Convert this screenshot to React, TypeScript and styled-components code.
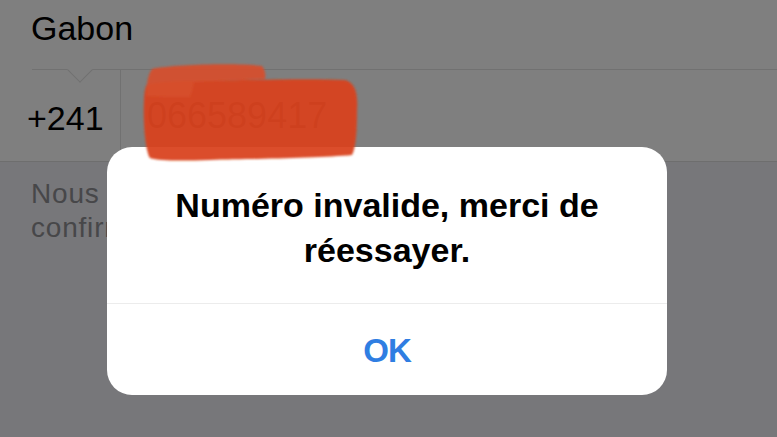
import React from "react";
import styled, { createGlobalStyle } from "styled-components";

const Global = createGlobalStyle`
  html, body { margin: 0; padding: 0; }
  body {
    font-family: "Liberation Sans", Arial, sans-serif;
    background: #77777a;
  }
  * { box-sizing: border-box; }
`;

const Screen = styled.div`
  position: relative;
  width: 777px;
  height: 437px;
  overflow: hidden;
  background: #efeff4;
`;

const Form = styled.div`
  display: flex;
  flex-direction: column;
`;

const CountryRow = styled.div`
  height: 69px;
  padding: 8px 0 0 31px;
  background: #fff;
  font-size: 34px;
  line-height: 40px;
  color: #000;
`;

const Separator = styled.div`
  position: relative;
  height: 1px;
  background: #fff;
  &::before {
    content: "";
    position: absolute;
    left: 32px;
    right: 0;
    top: 0;
    height: 1px;
    background: #e2e2e2;
  }
  &::after {
    content: "";
    position: absolute;
    left: 71px;
    top: -8px;
    width: 17px;
    height: 17px;
    background: #fff;
    border-right: 1px solid #e2e2e2;
    border-bottom: 1px solid #e2e2e2;
    transform: rotate(45deg);
  }
`;

const PhoneRow = styled.div`
  display: flex;
  height: 92px;
  background: #fff;
  border-bottom: 1px solid #dcdcdc;
`;

const CodeCell = styled.div`
  width: 121px;
  padding: 28px 0 0 27px;
  border-right: 1px solid #e2e2e2;
  font-size: 34px;
  line-height: 40px;
  color: #000;
`;

const NumberCell = styled.div`
  flex: 1;
  padding: 26px 0 0 26px;
  font-size: 36px;
  line-height: 40px;
  color: #4a4a4a;
`;

const Hint = styled.p`
  margin: 0;
  padding: 15px 0 0 31px;
  font-size: 28px;
  line-height: 34px;
  letter-spacing: 0.8px;
  word-spacing: 2px;
  color: #8e8e93;
  white-space: nowrap;
`;

const Dim = styled.div`
  position: absolute;
  inset: 0;
  display: flex;
  align-items: flex-start;
  padding: 147px 0 0 107px;
  background: rgba(0, 0, 0, 0.5);
`;

const Alert = styled.div`
  display: flex;
  flex-direction: column;
  width: 560px;
  height: 248px;
  background: #fff;
  border-radius: 25px;
  overflow: hidden;
`;

const AlertTitle = styled.h2`
  margin: 0;
  height: 156px;
  padding: 36px 20px 0;
  font-size: 34px;
  font-weight: 700;
  line-height: 45px;
  text-align: center;
  color: #000;
`;

const AlertButton = styled.button`
  flex: 1;
  margin: 0;
  padding: 2px 0 0;
  border: none;
  border-top: 1px solid #ececec;
  background: transparent;
  font-family: inherit;
  font-size: 33px;
  font-weight: 700;
  line-height: 88px;
  letter-spacing: -1px;
  color: #2f7ee2;
  cursor: pointer;
`;

const Scribble = styled.svg`
  position: absolute;
  inset: 0;
  width: 777px;
  height: 437px;
  pointer-events: none;
`;

export default function App() {
  return (
    <>
      <Global />
      <Screen>
        <Form>
          <CountryRow>Gabon</CountryRow>
          <Separator />
          <PhoneRow>
            <CodeCell>+241</CodeCell>
            <NumberCell>066589417</NumberCell>
          </PhoneRow>
          <Hint>
            Nous vous enverrons un code de
            <br />
            confirmation par SMS.
          </Hint>
        </Form>
        <Dim>
          <Alert role="alertdialog">
            <AlertTitle>Numéro invalide, merci de réessayer.</AlertTitle>
            <AlertButton>OK</AlertButton>
          </Alert>
        </Dim>
        <Scribble viewBox="0 0 777 437">
          <defs>
            <filter id="soft" x="-10%" y="-10%" width="120%" height="120%">
              <feGaussianBlur stdDeviation="1.3" />
            </filter>
          </defs>
          <g filter="url(#soft)">
            <path
              d="M146,86 C150,82 175,81 195,81 C250,80 310,78 345,80 C356,83 358,95 357,110 C357,130 356,148 352,155 C320,158 250,159 210,160 C180,161 160,161 150,158 C145,150 143,120 144,100 C144,94 145,89 146,86 Z"
              fill="#d9431d"
              fillOpacity="0.94"
            />
            <path
              d="M152,69 C175,64 240,63 262,66 C265,70 266,75 265,79 C240,80 215,81 194,82 C193,88 192,93 190,97 C175,97 160,97 146,96 C146,86 148,74 152,69 Z"
              fill="#d64f2b"
              fillOpacity="0.93"
            />
          </g>
        </Scribble>
      </Screen>
    </>
  );
}
